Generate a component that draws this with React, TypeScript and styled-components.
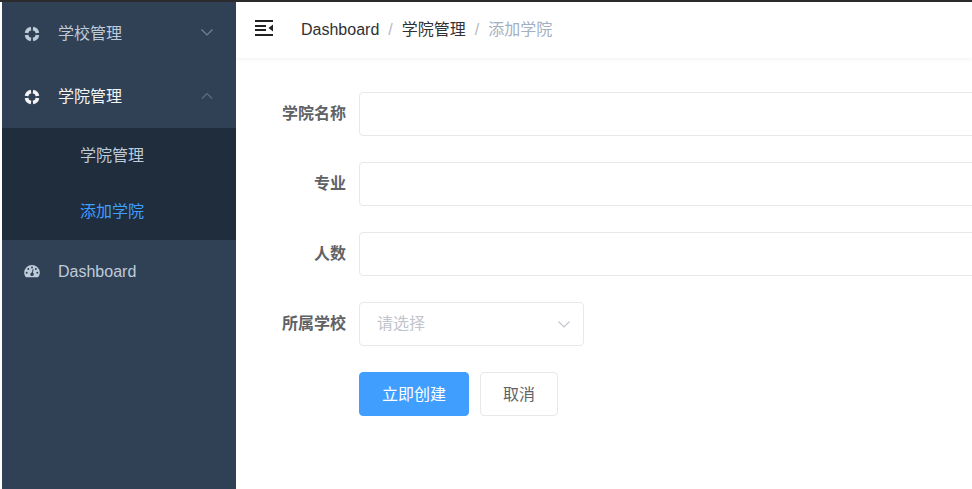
import React, { useState } from 'react';
import styled, { createGlobalStyle } from 'styled-components';

const GlobalStyle = createGlobalStyle`
  *, *::before, *::after { box-sizing: border-box; }
  body {
    margin: 0;
    background: #fff;
    color: #606266;
    font-family: "Liberation Sans", "Noto Sans CJK SC", sans-serif;
    font-size: 16px;
    line-height: 24px;
  }
  button, input, select { font: inherit; }
`;

const Shell = styled.div`
  display: flex;
  min-height: 100vh;
  border-top: 2px solid #2b2b2d;
  padding-left: 2px;
  overflow: hidden;
`;

const Sidebar = styled.nav`
  flex: 0 0 234px;
  background: #304156;
`;

const MenuButton = styled.button<{ $active?: boolean }>`
  display: flex;
  align-items: center;
  width: 100%;
  height: 63px;
  padding: 0 22px;
  border: 0;
  background: none;
  color: ${(p) => (p.$active ? '#f4f4f5' : '#bfcbd9')};
  text-align: left;
  cursor: pointer;
`;

const MenuLink = styled.a`
  display: flex;
  align-items: center;
  height: 63px;
  padding: 0 22px;
  color: #bfcbd9;
  text-decoration: none;
`;

const MenuIcon = styled.svg`
  flex: none;
  width: 16px;
  height: 16px;
  margin-right: 18px;
`;

const MenuText = styled.span`
  flex: 1;
`;

const Arrow = styled.svg<{ $dim?: boolean }>`
  flex: none;
  width: 14px;
  height: 14px;
  color: ${(p) => (p.$dim ? '#5f6e80' : '#78838f')};
`;

const SubMenu = styled.div`
  background: #1f2d3d;
`;

const SubLink = styled.a<{ $active?: boolean }>`
  display: flex;
  align-items: center;
  height: 56px;
  padding-left: 78px;
  color: ${(p) => (p.$active ? '#409eff' : '#bfcbd9')};
  text-decoration: none;
`;

const Main = styled.main`
  flex: 1;
  min-width: 0;
`;

const Navbar = styled.header`
  display: flex;
  align-items: center;
  height: 56px;
  padding-left: 18px;
  box-shadow: 0 1px 4px rgba(0, 21, 41, 0.06);
`;

const FoldButton = styled.button`
  display: flex;
  padding: 0;
  margin-right: 27px;
  border: 0;
  background: none;
  color: #222;
  cursor: pointer;
`;

const Breadcrumb = styled.nav`
  display: flex;
  gap: 9px;
`;

const Crumb = styled.a`
  color: #303133;
  text-decoration: none;
`;

const Muted = styled.span`
  color: #a3afc2;
`;

const Slash = styled.span`
  color: #b4bac4;
`;

const Form = styled.form`
  display: flex;
  flex-direction: column;
  gap: 26px;
  margin-right: -8px;
  padding: 34px 0 34px 24px;
`;

const Row = styled.div`
  display: grid;
  grid-template-columns: 86px minmax(0, 1fr);
  column-gap: 13px;
  align-items: center;
`;

const Label = styled.label`
  color: #606266;
  font-weight: 700;
  text-align: right;
`;

const TextInput = styled.input`
  width: 100%;
  height: 44px;
  padding: 0 17px;
  border: 1px solid #e6e8ec;
  border-radius: 4px;
  background: #fff;
  color: #606266;
  outline: none;

  &:focus { border-color: #409eff; }
`;

const SelectWrap = styled.div`
  display: grid;
  align-items: center;
  width: 225px;

  > * { grid-area: 1 / 1; }
`;

const Select = styled.select`
  appearance: none;
  width: 100%;
  height: 44px;
  padding: 0 40px 0 17px;
  border: 1px solid #e6e8ec;
  border-radius: 4px;
  background: #fff;
  color: #c0c4cc;
  outline: none;
`;

const SelectArrow = styled(Arrow)`
  justify-self: end;
  margin-right: 13px;
  color: #c0c4cc;
  pointer-events: none;
`;

const Actions = styled.div`
  grid-column: 2;
  display: flex;
  gap: 11px;
`;

const Button = styled.button<{ $primary?: boolean }>`
  height: 44px;
  padding: 2px 22px 0;
  border: 1px solid ${(p) => (p.$primary ? '#409eff' : '#e6e8ec')};
  border-radius: 4px;
  background: ${(p) => (p.$primary ? '#409eff' : '#fff')};
  color: ${(p) => (p.$primary ? '#fff' : '#606266')};
  cursor: pointer;
`;

const RingIcon = () => (
  <MenuIcon viewBox="0 0 16 16" aria-hidden="true">
    <circle
      cx="8"
      cy="8"
      r="5.6"
      fill="none"
      stroke="currentColor"
      strokeWidth="3.6"
      pathLength="80"
      strokeDasharray="15.2 4.8"
      strokeDashoffset="-2.4"
    />
  </MenuIcon>
);

const GaugeIcon = () => (
  <MenuIcon viewBox="0 0 16 16" aria-hidden="true">
    <path
      fill="currentColor"
      d="M8 1A7.800 7.600 0 0 0 .2 8.600c0 1.600.5 3 1.300 4.200.2.3.4.4.7.4h11.600c.3 0 .5-.1.7-.4.8-1.200 1.300-2.600 1.300-4.200A7.800 7.600 0 0 0 8 1z"
    />
    <g fill="#304156">
      <circle cx="2.700" cy="8.700" r="1" />
      <circle cx="4.300" cy="4.900" r="1" />
      <circle cx="8" cy="3.400" r="1" />
      <circle cx="11.900" cy="4.900" r="1" />
      <circle cx="13.300" cy="8.700" r="1" />
      <path d="M8.700 5l.9.200-.7 3.500a1.800 1.800 0 1 1-1-.2z" />
    </g>
  </MenuIcon>
);

const FoldIcon = () => (
  <svg width="20" height="20" viewBox="0 0 20 20" fill="currentColor" aria-hidden="true">
    <path d="M1 0h18v2H1zM1 5h11v2H1zM1 9h11v2H1zM1 14h18v2H1zM19 4.500v7L14.500 8z" />
  </svg>
);

const chevronPaths = {
  down: 'M1.500 4.500L7 10l5.500-5.500',
  up: 'M2 9.500L7 4.500l5 5',
};

export default function App() {
  const [values, setValues] = useState<Record<string, string>>({});

  const textFields = [
    { id: 'name', label: '学院名称' },
    { id: 'major', label: '专业' },
    { id: 'count', label: '人数' },
  ];

  const arrowProps = {
    viewBox: '0 0 14 14',
    fill: 'none',
    stroke: 'currentColor',
    strokeWidth: 1.2,
    'aria-hidden': true,
  };

  return (
    <>
      <GlobalStyle />
      <Shell>
        <Sidebar>
          <MenuButton type="button" aria-expanded={false}>
            <RingIcon />
            <MenuText>学校管理</MenuText>
            <Arrow {...arrowProps}>
              <path d={chevronPaths.down} transform="translate(0 -2)" />
            </Arrow>
          </MenuButton>
          <MenuButton type="button" $active aria-expanded>
            <RingIcon />
            <MenuText>学院管理</MenuText>
            <Arrow {...arrowProps} $dim>
              <path d={chevronPaths.up} transform="translate(0 -1)" />
            </Arrow>
          </MenuButton>
          <SubMenu>
            <SubLink href="#list">学院管理</SubLink>
            <SubLink href="#add" $active aria-current="page">添加学院</SubLink>
          </SubMenu>
          <MenuLink href="#dashboard">
            <GaugeIcon />
            <MenuText>Dashboard</MenuText>
          </MenuLink>
        </Sidebar>
        <Main>
          <Navbar>
            <FoldButton type="button" aria-label="折叠菜单">
              <FoldIcon />
            </FoldButton>
            <Breadcrumb>
              <Crumb href="#dashboard">Dashboard</Crumb>
              <Slash>/</Slash>
              <Crumb href="#list">学院管理</Crumb>
              <Slash>/</Slash>
              <Muted>添加学院</Muted>
            </Breadcrumb>
          </Navbar>
          <Form onSubmit={(e) => e.preventDefault()}>
            {textFields.map(({ id, label }) => (
              <Row key={id}>
                <Label htmlFor={id}>{label}</Label>
                <TextInput
                  id={id}
                  value={values[id] ?? ''}
                  onChange={(e) => setValues({ ...values, [id]: e.target.value })}
                />
              </Row>
            ))}
            <Row>
              <Label htmlFor="school">所属学校</Label>
              <SelectWrap>
                <Select id="school" defaultValue="">
                  <option value="">请选择</option>
                </Select>
                <SelectArrow {...arrowProps}>
                  <path d={chevronPaths.down} />
                </SelectArrow>
              </SelectWrap>
            </Row>
            <Row>
              <Actions>
                <Button type="submit" $primary>立即创建</Button>
                <Button type="button">取消</Button>
              </Actions>
            </Row>
          </Form>
        </Main>
      </Shell>
    </>
  );
}
